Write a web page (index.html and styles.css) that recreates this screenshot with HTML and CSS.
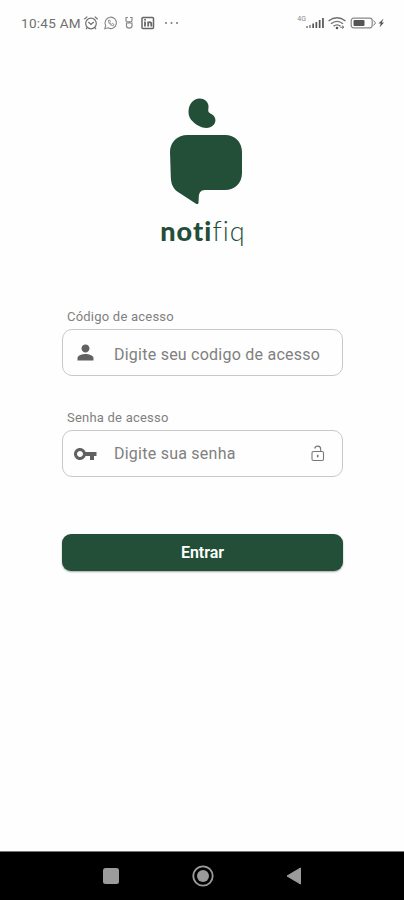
FILE: index.html
```html
<!DOCTYPE html>
<html lang="pt-BR">
<head>
    <meta charset="UTF-8">
    <meta name="viewport" content="width=device-width, initial-scale=1.0">
    <title>Notifiq</title>
    <link rel="stylesheet" href="styles.css">
</head>
<body>
    <div class="status-bar">
        <span class="time">10:45 AM</span>
        <svg class="status-left" width="98" height="18" viewBox="0 0 98 18" fill="none" stroke="#707070" stroke-width="1.2">
            <!-- alarm -->
            <circle cx="9" cy="9.5" r="5.3"/>
            <path d="M6.3 8L9 10.500 11.800 8M2.300 5.300l3-2.700M15.700 5.300l-3-2.700M5.200 13.700L4 15.200M12.800 13.700l1.200 1.500"/>
            <!-- whatsapp -->
            <path stroke="#888" stroke-width="1.1" d="M22.800 14.700l.9-3.200a5.700 5.700 0 1 1 2.200 2.300z"/>
            <path stroke="#777" d="M26.500 6.200c-.5 3 2.100 5.600 5 5.400l.4-1.400-1.500-.7-.9.700c-.9-.4-1.500-1-1.800-1.900l.7-.8-.6-1.400z" stroke-width=".8"/>
            <!-- app -->
            <path stroke="#888" d="M43.500 3.500H46M48 3.500h2.500M44 3.500v3.300c0 1.500 6 1.500 6 0V3.500M44 9h6.500M44.500 9v3c0 2.700 5.500 2.700 5.500 0V9"/>
            <!-- linkedin -->
            <rect x="60" y="3.500" width="11.500" height="11" rx="1" stroke="#666" stroke-width="1.500"/>
            <path stroke="#666" stroke-width="1.800" d="M63 7.500v5M63 5v1.500M66.200 12.500v-5M66.200 9.300c.5-1.800 3.100-1.600 3.100.3v2.900"/>
            <g fill="#777" stroke="none"><circle cx="84" cy="9" r="1"/><circle cx="89.500" cy="9" r="1"/><circle cx="95" cy="9" r="1"/></g>
        </svg>
        <span class="network">4G</span>
        <svg class="status-right" width="80" height="18" viewBox="0 0 80 18">
            <!-- signal -->
            <path fill="#999" d="M0 12h2v2H0zM3 11h2v3H3z"/>
            <path fill="#555" d="M6.300 9.500H8V14H6.300zM9.500 8h1.700v6H9.500zM12.800 6h1.700v8h-1.700zM16.100 4h1.700v10h-1.700z"/>
            <!-- wifi -->
            <path fill="none" stroke="#707070" stroke-width="1.400" d="M22.500 7q8.500-6.500 17 0M25 9.700q6-4.700 12 0M27.500 12.200q3.500-2.700 7 0"/>
            <circle cx="31" cy="14" r="1.300" fill="#555"/>
            <path d="M34 13.200h4M36 11.700l2 1.500-2 1.500" fill="none" stroke="#777"/>
            <!-- battery -->
            <rect x="45.200" y="4.200" width="21" height="9.600" rx="2.500" fill="none" stroke="#888" stroke-width="1.200"/>
            <rect x="47.500" y="6" width="11" height="6" rx="1" fill="#555"/>
            <path d="M67.500 6.500l2 2.500-2 2.500" fill="none" stroke="#777"/>
            <path d="M77.500 4.500l-5 5h2.300l-1.300 4 4.500-5h-2.200z" fill="#555"/>
        </svg>
    </div>

    <main class="login">
        <div class="logo">
            <svg width="74" height="110" viewBox="0 0 74 110" fill="#234f39">
                <path d="M19.500 15C19.500 7 24.500 1.400 30.500 1.400c6 0 10 4.600 8.900 10.100-.6 3.300.4 4.100 2.900 5.500 4.800 2.700 5.300 7.500 2.200 11-3.300 3.700-9.500 3.800-14.500 1-6.500-3.500-10.500-8-10.500-14z"/>
                <path d="M18.500 38H56c10 0 17 7 17 17v21c0 10-7 17-17 17H36c-4.500 0-6 3-6.200 7l-.3 5.500c0 1.400-1 2-2.500 1.200L9 95C4 91.500 2 87 1.800 80L1 55c0-10 7.500-17 17.500-17z"/>
            </svg>
            <div class="wordmark"><b>noti</b><span>fiq</span></div>
        </div>

        <form>
            <div class="field">
                <label for="codigo">Código de acesso</label>
                <div class="input-box">
                    <svg class="icon" width="24" height="24" viewBox="0 0 24 24" fill="#616161">
                        <path d="M11.500 11.500c2.210 0 4-1.790 4-4s-1.790-4-4-4-4 1.790-4 4 1.790 4 4 4zm0 1.500c-2.670 0-8 1.340-8 4v2.500h16V17c0-2.660-5.330-4-8-4z"/>
                    </svg>
                    <input type="text" id="codigo" placeholder="Digite seu codigo de acesso">
                </div>
            </div>
            <div class="field senha">
                <label for="senha">Senha de acesso</label>
                <div class="input-box">
                    <svg class="icon" width="24" height="24" viewBox="1 0 24 24" fill="#616161">
                        <path d="M12.650 10C11.830 7.670 9.610 6 7 6c-3.310 0-6 2.690-6 6s2.690 6 6 6c2.610 0 4.830-1.670 5.650-4H17v4h4v-4h2.500v-4H12.650zM7 15c-1.650 0-3-1.350-3-3s1.350-3 3-3 3 1.350 3 3-1.350 3-3 3z"/>
                    </svg>
                    <input type="password" id="senha" placeholder="Digite sua senha">
                    <svg class="lock" width="14" height="17" viewBox="0 0 14 17" fill="none" stroke="#777" stroke-width="1.100">
                        <rect x="1" y="6.500" width="11.500" height="9" rx="1.500"/>
                        <path d="M3.700 3.500c.8-3.300 6-3.200 6 .7v2.300"/>
                        <path d="M6.700 9.800v2.500" stroke-width="1.600"/>
                    </svg>
                </div>
            </div>
            <button type="button">Entrar</button>
        </form>
    </main>

    <div class="nav-bar">
        <svg width="16" height="16" viewBox="0 0 16 16"><rect width="16" height="16" rx="2.500" fill="#9b9b9b"/></svg>
        <svg width="22" height="22" viewBox="0 0 22 22"><circle cx="11" cy="11" r="9.700" fill="none" stroke="#9b9b9b" stroke-width="1.800"/><circle cx="11" cy="11" r="6" fill="#9b9b9b"/></svg>
        <svg width="16" height="18" viewBox="0 0 16 18"><path d="M14.500 1v16L1 9z" fill="#9b9b9b" stroke="#9b9b9b" stroke-linejoin="round"/></svg>
    </div>
</body>
</html>
```

FILE: styles.css
```css
* {
    box-sizing: border-box;
}
body {
    margin: 0;
    height: 900px;
    display: flex;
    flex-direction: column;
    background-color: #fefefe;
    font-family: Roboto, sans-serif;
}
.status-bar {
    display: flex;
    align-items: center;
    height: 46px;
    padding: 0 18px 0 21px;
    color: #707070;
}
.time {
    width: 61px;
    font-size: 13.5px;
    letter-spacing: 0.3px;
    white-space: nowrap;
}
.network {
    margin: 0 0 9px auto;
    font-size: 7px;
    color: #888;
}
.status-left, .status-right {
    flex-shrink: 0;
}
.login {
    flex: 1;
    padding: 51px 61px 0 62px;
}
.logo {
    display: flex;
    flex-direction: column;
    align-items: center;
    height: 212px;
    padding-left: 7px;
}
.wordmark {
    margin: 8px 6px 0 0;
    color: #234f39;
    font-family: Lato, sans-serif;
    font-size: 27px;
    line-height: 32px;
    letter-spacing: 1.1px;
    white-space: nowrap;
}
.wordmark b {
    font-weight: 900;
}
.wordmark span {
    font-weight: 300;
}
.field {
    height: 101px;
}
label {
    display: block;
    height: 20px;
    padding-left: 5px;
    color: #808080;
    font-size: 13px;
    line-height: 16px;
    letter-spacing: 0.22px;
}
.input-box {
    display: flex;
    align-items: center;
    height: 47px;
    padding: 0 17px 0 11px;
    border: 1px solid #c8c8c8;
    border-radius: 10px;
}
input {
    flex: 1;
    min-width: 0;
    margin-left: 16px;
    padding: 3px 0 0;
    border: none;
    outline: none;
    background: none;
    font-family: inherit;
    font-size: 16px;
    letter-spacing: 0.24px;
}
.senha input {
    padding: 0 0 1px;
}
input::placeholder {
    color: #808080;
}
button {
    display: block;
    width: 100%;
    height: 37px;
    margin-top: 23px;
    border: none;
    border-radius: 9px;
    background-color: #234f39;
    box-shadow: 0 1px 2px rgba(0, 0, 0, 0.35);
    color: #fff;
    font-family: inherit;
    font-size: 16px;
    font-weight: 600;
}
.nav-bar {
    display: flex;
    align-items: center;
    justify-content: space-between;
    height: 49px;
    padding: 0 102px 0 103px;
    border-top: 1px solid #777;
    background-color: #000;
}
```
